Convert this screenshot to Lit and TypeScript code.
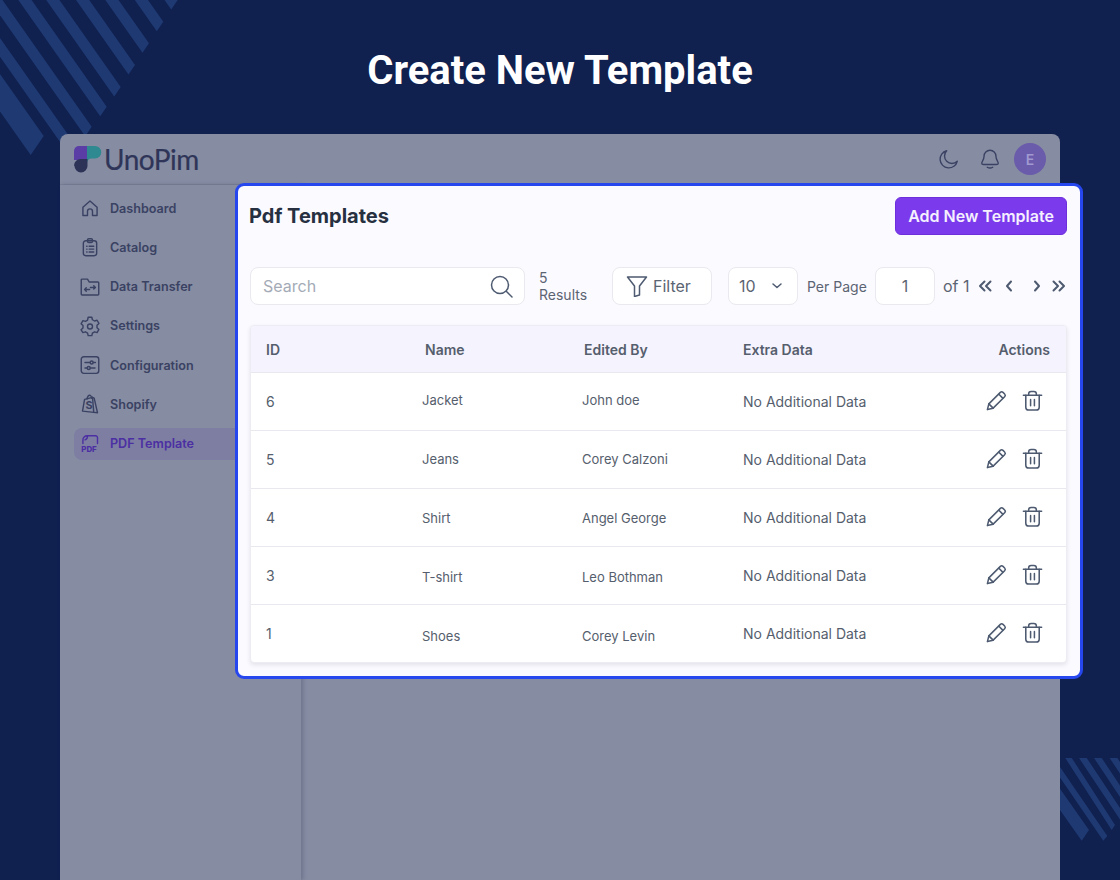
import { LitElement, html, css, svg } from 'lit';
import { customElement } from 'lit/decorators.js';

const NAV = [
    { label: 'Dashboard', icon: svg`<path d="M3.500 11.200 12 3.500l8.500 7.700V21H15v-5a3 3 0 0 0-6 0v5H3.500z"/>` },
    { label: 'Catalog', icon: svg`<rect x="4" y="4.500" width="16" height="18" rx="3"/><rect x="9" y="2" width="6" height="4.500" rx="1.500"/><path d="M8 11h.5M11 11h5.500M8 14.500h.5M11 14.500h5.500M8 18h.5M11 18h5.500"/>` },
    { label: 'Data Transfer', icon: svg`<path d="M1.500 20.500V3.500a1 1 0 0 1 1-1H9l2 3.500h10.500a1 1 0 0 1 1 1v13.500a1 1 0 0 1-1 1h-19a1 1 0 0 1-1-1z"/><path d="M5.500 15h6M5.500 15l2-2M5.500 15l2 2M12.500 12.500h6M18.500 12.500l-2-2M18.500 12.500l-2 2"/>` },
    { label: 'Settings', icon: svg`<path d="M9.800 1.500h4.400l.7 3 2.600 1.500 3-.9 2.200 3.800-2.300 2.100v3l2.300 2.100-2.200 3.800-3-.9-2.600 1.500-.7 3H9.800l-.7-3-2.600-1.500-3 .9L1.300 16.600l2.300-2.100v-3L1.300 9.400l2.200-3.800 3 .9 2.600-1.500z"/><circle cx="12" cy="12.500" r="3"/>` },
    { label: 'Configuration', icon: svg`<rect x="1.500" y="2" width="21" height="20" rx="3"/><path d="M6 9h6M16 9h2.500M6 15.500h2.500M12.500 15.500H18"/><circle cx="14" cy="9" r="1.800"/><circle cx="10.500" cy="15.500" r="1.800"/>` },
    { label: 'Shopify', icon: svg`<path d="M3 20.500 5.500 6.500 15 4l1.500 18z"/><path d="M8.500 6c0-3 2-4.500 3-4.500S14 3 14 5M15 4l2 1 4 17.500-4.500-.5"/><text class="shop" x="6.500" y="18">S</text>` },
];

const ROWS = [
    { id: 6, name: 'Jacket', by: 'John doe', shift: -4 },
    { id: 5, name: 'Jeans', by: 'Corey Calzoni', shift: -2 },
    { id: 4, name: 'Shirt', by: 'Angel George', shift: 0 },
    { id: 3, name: 'T-shirt', by: 'Leo Bothman', shift: 2 },
    { id: 1, name: 'Shoes', by: 'Corey Levin', shift: 4 },
];

// right corners of the top-left stripes, in page pixels
const CORNERS = [
    [177.7, 0], [163.3, 21.7], [149, 43.3], [135, 65], [120.7, 87], [106.7, 106.7], [91.7, 126.7], [77.3, 147.7],
];

const stripe = (x: number, y: number, wx: number, wy: number, k = 1.42) => {
    const back = 300;
    return `${x},${y} ${x - wx},${y + wy} ${x - wx - back},${y + wy - back * k} ${x - back},${y - back * k}`;
};

const pencil = svg`<path d="M2.500 21.500 4 15.500 16 3.500a2 2 0 0 1 2.800 0l1.700 1.700a2 2 0 0 1 0 2.800L8.500 20z"/><path d="M14.500 5.500l4 4M4 15.500l4.500 4.500"/>`;
const trash = svg`<path d="M2.500 6.500h19"/><path d="M8 6.500V5a2.500 2.500 0 0 1 2.500-2.500h3A2.500 2.500 0 0 1 16 5v1.500"/><path d="M5 6.500V19a3 3 0 0 0 3 3h8a3 3 0 0 0 3-3V6.500"/><path d="M10 11v6.500M14 11v6.500"/>`;

@customElement('app-root')
export class AppRoot extends LitElement {
    static styles = css`
        :host {
            display: block;
            position: relative;
            width: 1120px;
            height: 880px;
            overflow: hidden;
            background: #10204f;
            font-family: 'Inter', 'Liberation Sans', sans-serif;
        }
        svg { display: block; flex-shrink: 0; }
        .stripes {
            position: absolute;
            left: 0;
            top: 0;
        }
        .stripes polygon { fill: #1f3a73; }
        .title {
            position: relative;
            height: 134px;
            padding-top: 6px;
            box-sizing: border-box;
            display: flex;
            align-items: center;
            justify-content: center;
            font-family: 'Roboto', sans-serif;
            font-weight: 700;
            font-size: 40px;
            color: #fff;
        }
        .window {
            position: relative;
            margin: 0 60px;
            height: 746px;
            background: #868ca2;
            border-radius: 8px 8px 0 0;
            display: flex;
            flex-direction: column;
        }
        .topbar {
            height: 51px;
            box-sizing: border-box;
            border-bottom: 1px solid #7c8299;
            display: flex;
            align-items: center;
            padding: 0 14px;
            color: #3a4263;
        }
        .logo { display: flex; align-items: center; gap: 2px; }
        .logo-text {
            font-family: 'Lato', sans-serif;
            font-size: 28px;
            color: #2e3558;
            letter-spacing: -0.5px;
            -webkit-text-stroke: 0.2px #2e3558;
            line-height: 30px;
        }
        .top-icons {
            margin-left: auto;
            display: flex;
            align-items: center;
        }
        .top-icons svg {
            fill: none;
            stroke: #3a4263;
            stroke-width: 1.5;
            stroke-linecap: round;
            stroke-linejoin: round;
        }
        .bell { margin-left: 19px; }
        .avatar {
            margin-left: 13px;
            width: 32px;
            height: 32px;
            border-radius: 50%;
            background: #6a5bab;
            color: #a09ad0;
            font-size: 14px;
            font-weight: 600;
            display: flex;
            align-items: center;
            justify-content: center;
        }
        .body { flex: 1; display: flex; }
        .sidebar {
            width: 241px;
            box-sizing: border-box;
            padding: 7px 0 0 14px;
            box-shadow: 2px 0 4px rgba(50, 55, 85, 0.3);
        }
        .nav-item {
            height: 32px;
            margin-bottom: 7.300px;
            display: flex;
            align-items: center;
            gap: 10px;
            padding-left: 6px;
            border-radius: 8px;
            font-size: 12.600px;
            font-weight: 600;
            color: #3a4263;
        }
        .nav-item svg {
            fill: none;
            stroke: #3a4263;
            stroke-width: 1.700;
            stroke-linecap: round;
            stroke-linejoin: round;
            overflow: visible;
        }
        .nav-item .shop {
            fill: #3a4263;
            stroke: none;
            font: 700 13px 'Inter', sans-serif;
        }
        .nav-item.active {
            background: #7d7ea2;
            color: #4c2fa3;
        }
        .nav-item.active svg { stroke: #4c2fa3; }
        .nav-item.active svg text {
            fill: #4c2fa3;
            stroke: none;
            font: 800 9.500px 'Inter', sans-serif;
        }
        .popup {
            position: absolute;
            left: 175px;
            top: 49px;
            width: 848px;
            height: 496px;
            box-sizing: border-box;
            border: 3px solid #2747ee;
            border-radius: 9px;
            background: #fbfaff;
            padding: 11px 13px 0 12px;
            color: #555e6d;
        }
        .head {
            display: flex;
            justify-content: space-between;
            align-items: center;
        }
        .head h1 {
            margin: 0 0 0 -1px;
            font-size: 20px;
            font-weight: 700;
            color: #263040;
        }
        .add {
            width: 172px;
            height: 38px;
            box-sizing: border-box;
            border: 1px solid #6d2fdc;
            border-radius: 6px;
            background: #7c3aed;
            color: #f4f0fe;
            font: 600 16px 'Inter', sans-serif;
        }
        .toolbar {
            margin-top: 32px;
            height: 38px;
            display: flex;
            align-items: center;
            font-size: 14px;
            color: #5b6472;
        }
        .box {
            height: 38px;
            box-sizing: border-box;
            background: #fff;
            border: 1px solid #e9e9ef;
            border-radius: 8px;
            display: flex;
            align-items: center;
            font-size: 16px;
            flex-shrink: 0;
        }
        .toolbar svg {
            fill: none;
            stroke: #4d5a70;
            stroke-width: 1.500;
            stroke-linecap: round;
            stroke-linejoin: round;
        }
        .search {
            width: 275px;
            justify-content: space-between;
            padding: 0 10px 0 12px;
            color: #a4abb6;
        }
        .results {
            width: 59px;
            margin-left: 14px;
            line-height: 17px;
            flex-shrink: 0;
        }
        .filter {
            width: 100px;
            margin-left: 14px;
            gap: 5px;
            padding-left: 13px;
        }
        .select {
            width: 70px;
            margin-left: 16px;
            padding-left: 10px;
            gap: 15px;
        }
        .per-page { margin-left: 9px; width: 60px; flex-shrink: 0; white-space: nowrap; }
        .page {
            width: 60px;
            margin-left: 8px;
            justify-content: center;
        }
        .of { margin-left: 8px; font-size: 16px; width: 32px; flex-shrink: 0; white-space: nowrap; }
        .pager { display: flex; flex-shrink: 0; }
        .toolbar .pager svg { stroke-width: 2; }
        .pager svg:nth-child(2) { margin-left: 4px; }
        .pager svg:nth-child(3) { margin-left: 8px; }
        .pager svg:nth-child(4) { margin-left: 2px; }
        .table {
            margin-top: 20px;
            background: #fff;
            border: 1px solid #ececf2;
            border-radius: 4px;
            box-shadow: 0 2px 4px rgba(60, 60, 90, 0.12);
            overflow: hidden;
        }
        .row {
            display: grid;
            grid-template-columns: 156px 160px 161px 1fr 120px;
            align-items: center;
            height: 58px;
            box-sizing: border-box;
            border-top: 1px solid #e8e8ee;
            padding: 0 16px 0 15px;
            font-size: 14px;
        }
        .row.header {
            height: 46px;
            border-top: 0;
            background: #f5f3fd;
            font-weight: 600;
        }
        .row.header span:nth-child(2) { padding-left: 3px; }
        .row.header span:nth-child(3) { padding-left: 2px; }
        .row.header span:last-child { text-align: right; }
        .row .small { font-size: 13px; }
        .actions {
            display: flex;
            justify-content: flex-end;
            gap: 13px;
            padding-right: 6px;
            margin-top: -3px;
        }
        .actions svg {
            fill: none;
            stroke: #4d5a70;
            stroke-width: 1.600;
            stroke-linecap: round;
            stroke-linejoin: round;
        }
    `;

    render() {
        return html`
            <svg class="stripes" width="1120" height="880" viewBox="0 0 1120 880">
                ${CORNERS.map(([x, y]) => svg`<polygon points=${stripe(x, y, 6.5, 9.500)}></polygon>`)}
                <polygon points=${stripe(43.7, 136, 13, 19)}></polygon>
                <svg x="1060" y="758" width="60" height="122" viewBox="1060 758 60 122">
                    <polygon points=${stripe(1089, 830, 7.300, 10.700)}></polygon>
                    <polygon points=${stripe(1107.300, 836, 4, 4.700, 1.46)}></polygon>
                    <polygon points=${stripe(1115, 825, 3.300, 5, 1.550)}></polygon>
                    <polygon points=${stripe(1146.700, 848, 3, 7, 1.500)}></polygon>
                    <polygon points=${stripe(1161.700, 848, 3, 7, 1.500)}></polygon>
                    <polygon points=${stripe(1177.300, 848, 3, 7, 1.500)}></polygon>
                </svg>
            </svg>
            <div class="title">Create New Template</div>
            <div class="window">
                <div class="topbar">
                    <div class="logo">
                        <svg width="28" height="27" viewBox="0 0 28 27">
                            <path d="M5 0h9v14H0V5a5 5 0 0 1 5-5z" fill="#5a3ea6"/>
                            <path d="M13 0h8a6 6 0 0 1 0 12.500h-3.500A4.500 4.500 0 0 0 13 17z" fill="#2e8a90"/>
                            <path d="M0 19.500A6.500 6.500 0 0 1 6.500 13h7v7a6.500 6.500 0 0 1-13 0z" fill="#2d3356"/>
                        </svg>
                        <span class="logo-text">UnoPim</span>
                    </div>
                    <div class="top-icons">
                        <svg width="22" height="22" viewBox="0 0 24 24"><path d="M9.500 3a9.500 9.500 0 1 0 11.500 11.500A8 8 0 0 1 9.500 3z"/></svg>
                        <svg class="bell" width="22" height="22" viewBox="0 0 24 24"><path d="M12 2.500a6.500 6.500 0 0 0-6.500 6.500c0 4-2.500 6-2.500 7.500 0 1 .8 1.500 2 1.500h14c1.200 0 2-.5 2-1.500 0-1.500-2.500-3.500-2.500-7.500A6.500 6.500 0 0 0 12 2.500z"/><path d="M9 21c1.800 1 4.200 1 6 0"/></svg>
                        <div class="avatar">E</div>
                    </div>
                </div>
                <div class="body">
                    <nav class="sidebar">
                        ${NAV.map((n) => html`
                            <div class="nav-item">
                                <svg width="20" height="20" viewBox="0 0 24 24">${n.icon}</svg>
                                ${n.label}
                            </div>
                        `)}
                        <div class="nav-item active">
                            <svg width="20" height="20" viewBox="0 0 24 24">
                                <path d="M3.500 11.500V7a5 5 0 0 1 5-5h10a2.500 2.500 0 0 1 2.500 2.500v7M9 2.500c0 2-.5 4-3 4.500"/>
                                <text x="1.500" y="21">PDF</text>
                            </svg>
                            PDF Template
                        </div>
                    </nav>
                </div>
                <section class="popup">
                    <div class="head">
                        <h1>Pdf Templates</h1>
                        <button class="add">Add New Template</button>
                    </div>
                    <div class="toolbar">
                        <div class="box search">
                            Search
                            <svg width="26" height="26" viewBox="0 0 26 26"><circle cx="12" cy="12" r="8.500"/><path d="M18.500 18.500 24 24"/></svg>
                        </div>
                        <div class="results">5<br />Results</div>
                        <div class="box filter">
                            <svg width="22" height="22" viewBox="0 0 22 22"><path d="M1.500 2h19l-7 9v9l-5 1.500V11z"/></svg>
                            Filter
                        </div>
                        <div class="box select">
                            10
                            <svg width="12" height="12" viewBox="0 0 12 12"><path d="M2 4l4 3.500L10 4"/></svg>
                        </div>
                        <div class="per-page">Per Page</div>
                        <div class="box page">1</div>
                        <div class="of">of 1</div>
                        <div class="pager">
                            <svg width="20" height="20" viewBox="0 0 20 20"><path d="M9.500 5.500 5 10l4.500 4.500M15.500 5.500 11 10l4.500 4.500"/></svg>
                            <svg width="20" height="20" viewBox="0 0 20 20"><path d="M12 5.500 8 10l4 4.500"/></svg>
                            <svg width="20" height="20" viewBox="0 0 20 20"><path d="M8 5.500l4 4.500-4 4.500"/></svg>
                            <svg width="20" height="20" viewBox="0 0 20 20"><path d="M4.500 5.500 9 10l-4.500 4.500M10.500 5.500 15 10l-4.500 4.500"/></svg>
                        </div>
                    </div>
                    <div class="table">
                        <div class="row header">
                            <span>ID</span><span>Name</span><span>Edited By</span><span>Extra Data</span><span>Actions</span>
                        </div>
                        ${ROWS.map((r) => html`
                            <div class="row">
                                <span>${r.id}</span>
                                <span class="small" style="margin-top: ${r.shift}px">${r.name}</span>
                                <span class="small" style="margin-top: ${r.shift}px">${r.by}</span>
                                <span>No Additional Data</span>
                                <div class="actions">
                                    <svg width="23" height="23" viewBox="0 0 24 24">${pencil}</svg>
                                    <svg width="23" height="23" viewBox="0 0 24 24">${trash}</svg>
                                </div>
                            </div>
                        `)}
                    </div>
                </section>
            </div>
        `;
    }
}
